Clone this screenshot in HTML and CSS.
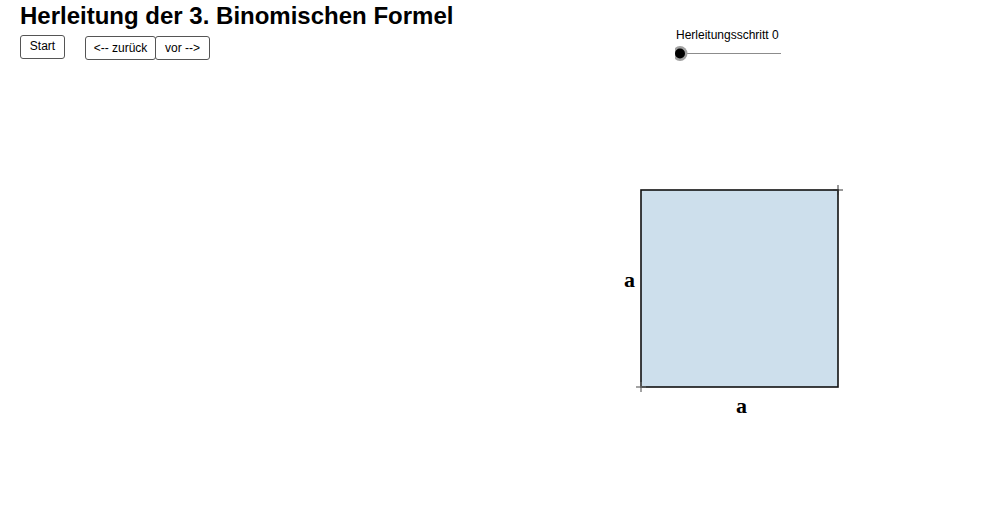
FILE: index.html
```html
<!DOCTYPE html>
<html lang="de">
<head>
<meta charset="utf-8">
<title>Herleitung der 3. Binomischen Formel</title>
<link rel="stylesheet" href="styles.css">
</head>
<body>
<div class="app">
  <h1 class="title">Herleitung der 3. Binomischen Formel</h1>
  <div class="toolbar">
    <button class="btn btn-start">Start</button>
    <div class="btn-group">
      <button class="btn btn-back">&lt;-- zurück</button>
      <button class="btn btn-fwd">vor --&gt;</button>
    </div>
  </div>
  <div class="slider">
    <div class="slider-label">Herleitungsschritt 0</div>
    <svg class="slider-svg" width="110" height="20" viewBox="0 0 110 20">
      <line x1="5" y1="9.5" x2="106" y2="9.5" stroke="#8c8c8c" stroke-width="1"/>
      <circle cx="5" cy="9.5" r="7.5" fill="#a0a0a0"/>
      <circle cx="5" cy="9.5" r="5" fill="#000"/>
    </svg>
  </div>
  <svg class="canvas" width="987" height="524" viewBox="0 0 987 524">
    <rect x="641" y="190" width="197" height="197" fill="#cddfec" stroke="#111" stroke-width="1.6"/>
    <line x1="838" y1="185" x2="838" y2="195" stroke="#333" stroke-width="1"/>
    <line x1="833" y1="190" x2="843" y2="190" stroke="#333" stroke-width="1"/>
    <line x1="641" y1="382" x2="641" y2="392" stroke="#666" stroke-width="1.2"/>
    <line x1="636" y1="387" x2="646" y2="387" stroke="#666" stroke-width="1.2"/>
    <text x="624" y="287" class="lbl">a</text>
    <text x="736" y="413" class="lbl">a</text>
  </svg>
</div>
</body>
</html>
```
FILE: styles.css
```css
html, body {
  margin: 0;
  padding: 0;
  background: #fff;
}
.app {
  position: relative;
  width: 987px;
  height: 524px;
  overflow: hidden;
  font-family: "Liberation Sans", Arial, sans-serif;
}
.title {
  margin: 0;
  padding: 2px 0 0 20px;
  font-size: 24px;
  font-weight: bold;
  line-height: 27px;
  color: #000;
}
.toolbar {
  display: flex;
  align-items: flex-start;
  gap: 20px;
  padding: 6px 0 0 20px;
  position: relative;
  z-index: 2;
}
.btn-group {
  display: flex;
  margin-top: 1px;
}
.btn {
  font-family: "Liberation Sans", Arial, sans-serif;
  font-size: 12px;
  color: #000;
  background: #fff;
  border: 1px solid #555;
  border-radius: 3px;
  height: 24px;
  padding: 0 0 1px 0;
  line-height: 20px;
  box-sizing: border-box;
}
.btn-start {
  width: 45px;
  padding-bottom: 2px;
}
.btn-back {
  width: 71px;
}
.btn-fwd {
  width: 55px;
  margin-left: -1px;
}
.slider {
  position: absolute;
  left: 675px;
  top: 29px;
  z-index: 2;
}
.slider-label {
  font-size: 12px;
  line-height: 13px;
  color: #000;
  padding-left: 1px;
}
.slider-svg {
  display: block;
  margin-top: 2px;
}
.canvas {
  position: absolute;
  left: 0;
  top: 0;
  z-index: 1;
}
.lbl {
  font-family: "Liberation Serif", "Times New Roman", serif;
  font-weight: bold;
  font-size: 22px;
  fill: #000;
}
```
